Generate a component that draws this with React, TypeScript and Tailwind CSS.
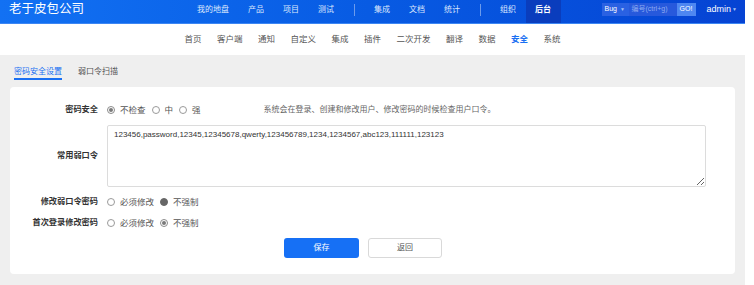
import clsx from 'clsx';

const topNav = [
  ['我的地盘', '产品', '项目', '测试'],
  ['集成', '文档', '统计'],
  ['组织', '后台'],
];

const subNav = ['首页', '客户端', '通知', '自定义', '集成', '插件', '二次开发', '翻译', '数据', '安全', '系统'];

const weakPasswords =
  '123456,password,12345,12345678,qwerty,123456789,1234,1234567,abc123,111111,123123';

type RadioState = 'off' | 'on' | 'filled';

function Radio({ state, label }: { state: RadioState; label: string }) {
  return (
    <span className="flex items-center mr-[6px]">
      <span
        className={clsx(
          'w-2 h-2 rounded-full border flex items-center justify-center mr-[5px]',
          state === 'off' && 'border-[#9a9a9a] bg-white',
          state === 'on' && 'border-[#8a8a8a] bg-white',
          state === 'filled' && 'border-[#666] bg-[#666]'
        )}
      >
        {state === 'on' && <span className="w-[4px] h-[4px] rounded-full bg-[#7a7a7a]" />}
      </span>
      <span className="text-[8.5px] text-[#555]">{label}</span>
    </span>
  );
}

function FormRow({ label, children, className }: { label: string; children: React.ReactNode; className?: string }) {
  return (
    <div className={clsx('flex items-center gap-[9px]', className)}>
      <div className="w-[88px] text-right text-[8.2px] font-semibold text-[#333]">{label}</div>
      {children}
    </div>
  );
}

export default function App() {
  return (
    <div className="w-[745px] h-[285px] bg-[#efefef] flex flex-col overflow-hidden font-['Liberation_Sans','Noto_Sans_CJK_SC',sans-serif]">
      {/* Top header */}
      <div className="h-[24px] flex items-start bg-gradient-to-r from-[#1271f3] to-[#0643d3] border-b border-[#3c86f3]">
        <div className="w-[187.5px] pl-[9px] leading-[19px] text-[12.5px] text-white">老于皮包公司</div>
        {topNav.map((group, gi) => (
          <div key={gi} className="flex items-start h-full">
            {gi > 0 && <div className="w-px h-[12px] mt-[3.5px] mx-[10px] bg-[#6c9bec]" />}
            {group.map((item) => (
              <div
                key={item}
                className={clsx(
                  'h-full px-[9.5px] leading-[19px] text-[8px]',
                  item === '后台' ? 'bg-[#0a3dbd] text-white font-bold' : 'text-[#dce7fd]'
                )}
              >
                {item}
              </div>
            ))}
          </div>
        ))}
        <div className="ml-[41px] mt-[3px] h-[13px] flex text-[7px]">
          <div className="w-[27px] bg-[#2a61e2] text-white flex items-center pl-[3px] gap-[3px]">
            Bug <span className="text-[5px] text-[#a9c2f5]">▼</span>
          </div>
          <div className="w-[48px] bg-[#2759dc] text-[#8daaf0] flex items-center pl-[3px]">编号(ctrl+g)</div>
          <div className="w-[19px] bg-[#4e87f1] text-white flex items-center justify-center">GO!</div>
        </div>
        <div className="ml-[11px] leading-[19px] text-[9px] text-white flex items-start">
          admin<span className="text-[5px] text-[#a9c2f5] ml-[1px]">▼</span>
        </div>
      </div>

      {/* Sub nav */}
      <div className="h-[31px] bg-white flex justify-center items-center text-[8.5px] text-[#555]">
        {subNav.map((item) => (
          <span
            key={item}
            className={clsx('px-[7.75px]', item === '安全' && 'text-[#1a6ff2] font-bold')}
          >
            {item}
          </span>
        ))}
      </div>

      {/* Tabs */}
      <div className="h-[32px] pl-[14px] pt-[12px] flex items-start gap-[16px] text-[8px]">
        <span className="leading-[10px] pb-[1px] border-b-2 border-[#1a6ff2] text-[#1a6ff2]">密码安全设置</span>
        <span className="leading-[10px] text-[#555]">弱口令扫描</span>
      </div>

      {/* Card */}
      <div className="mx-[10px] h-[187px] bg-white rounded-[4px] pt-[16px] flex flex-col">
        <FormRow label="密码安全" className="h-[14px]">
          <div className="flex items-center">
            <Radio state="on" label="不检查" />
            <Radio state="off" label="中" />
            <Radio state="off" label="强" />
            <span className="ml-[57px] text-[8px] text-[#666]">系统会在登录、创建和修改用户、修改密码的时候检查用户口令。</span>
          </div>
        </FormRow>

        <FormRow label="常用弱口令" className="mt-[8px]">
          <textarea
            readOnly
            defaultValue={weakPasswords}
            className="w-[599px] h-[62px] border border-[#dcdcdc] rounded-[2px] px-[6px] pt-[3px] text-[8px] leading-[12px] text-[#333] outline-none"
          />
        </FormRow>

        <FormRow label="修改弱口令密码" className="h-[14px] mt-[8px]">
          <div className="flex items-center">
            <Radio state="off" label="必须修改" />
            <Radio state="filled" label="不强制" />
          </div>
        </FormRow>

        <FormRow label="首次登录修改密码" className="h-[14px] mt-[7px]">
          <div className="flex items-center">
            <Radio state="off" label="必须修改" />
            <Radio state="on" label="不强制" />
          </div>
        </FormRow>

        <div className="mt-[8px] flex pl-[274px] gap-[9px] text-[8px]">
          <button className="w-[75px] h-[20px] rounded-[3px] bg-[#1670f5] text-white">保存</button>
          <button className="w-[74px] h-[20px] rounded-[3px] border border-[#d9d9d9] bg-white text-[#555]">返回</button>
        </div>
      </div>
    </div>
  );
}
